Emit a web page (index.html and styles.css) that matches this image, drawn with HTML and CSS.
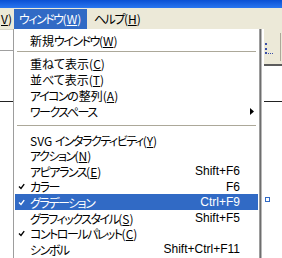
FILE: index.html
```html
<!DOCTYPE html>
<html>
<head>
  <meta charset="UTF-8" />
  <title>ウィンドウ メニュー</title>
  <link rel="stylesheet" href="styles.css">
</head>
<body>

  <div class="titlebar"></div>

  <div class="menubar">
    <span class="mb-item mb-prev"><u>V</u>)</span>
    <span class="mb-item mb-active"><span class="kn">ウィンドウ</span>(<u>W</u>)</span>
    <span class="mb-item"><span class="kn">ヘルプ</span>(<u>H</u>)</span>
  </div>

  <div class="desk">
    <div class="pane-left">
      <div class="pl-top"></div>
      <div class="pl-mid"></div>
    </div>
    <div class="pane-doc"></div>
    <div class="pane-right">
      <div class="pr-tool">
        <span class="grip"></span>
        <span class="tb-sep"></span>
      </div>
      <div class="pr-mid"></div>
      <div class="anchor"></div>
    </div>
  </div>

  <div class="dropdown">
    <div class="group">
      <div class="row"><span class="check"></span><span class="label">新規<span class="kn">ウインドウ</span>(<u>W</u>)</span></div>
    </div>
    <div class="sep sep-a"></div>
    <div class="group">
      <div class="row"><span class="check"></span><span class="label">重ねて表示(<u>C</u>)</span></div>
      <div class="row"><span class="check"></span><span class="label">並べて表示(<u>T</u>)</span></div>
      <div class="row"><span class="check"></span><span class="label"><span class="kn">アイコン</span>の整列(<u>A</u>)</span></div>
      <div class="row">
        <span class="check"></span><span class="label"><span class="kn">ワークスペース</span></span><span class="keys"></span>
        <span class="sub"><svg width="4" height="7" viewBox="0 0 4 7"><polygon points="0,0 4,3.5 0,7" fill="#000"/></svg></span>
      </div>
    </div>
    <div class="sep sep-b"></div>
    <div class="group lower">
      <div class="row"><span class="check"></span><span class="label">SVG <span class="kn">インタラクティビティ</span>(<u>Y</u>)</span></div>
      <div class="row"><span class="check"></span><span class="label"><span class="kn">アクション</span>(<u>N</u>)</span></div>
      <div class="row"><span class="check"></span><span class="label"><span class="kn">アピアランス</span>(<u>E</u>)</span><span class="keys">Shift+F6</span></div>
      <div class="row">
        <span class="check"><svg width="7" height="7" viewBox="0 0 7 7"><path d="M1 3.5 L3 5.5 L6.2 1.2" fill="none" stroke="currentColor" stroke-width="1.4"/></svg></span>
        <span class="label"><span class="kn">カラー</span></span><span class="keys">F6</span>
      </div>
      <div class="row active">
        <span class="check"><svg width="7" height="7" viewBox="0 0 7 7"><path d="M1 3.5 L3 5.5 L6.2 1.2" fill="none" stroke="currentColor" stroke-width="1.4"/></svg></span>
        <span class="label"><span class="kn">グラデーション</span></span><span class="keys">Ctrl+F9</span>
      </div>
      <div class="row"><span class="check"></span><span class="label"><span class="kn">グラフィックスタイル</span>(<u>S</u>)</span><span class="keys">Shift+F5</span></div>
      <div class="row">
        <span class="check"><svg width="7" height="7" viewBox="0 0 7 7"><path d="M1 3.5 L3 5.5 L6.2 1.2" fill="none" stroke="currentColor" stroke-width="1.4"/></svg></span>
        <span class="label"><span class="kn">コントロールパレット</span>(<u>C</u>)</span>
      </div>
      <div class="row"><span class="check"></span><span class="label"><span class="kn">シンボル</span></span><span class="keys">Shift+Ctrl+F11</span></div>
    </div>
  </div>

</body>
</html>
```

FILE: styles.css
```css
body {
  margin: 0;
  width: 282px;
  height: 258px;
  overflow: hidden;
  position: relative;
  background: #fff;
  color: #000;
  font-family: "Noto Sans CJK JP", sans-serif;
  font-size: 12px;
  font-feature-settings: "palt";
}

u {
  text-decoration: underline;
  text-underline-offset: 1px;
}

/* katakana runs are set tighter, like the old UI font */
.kn {
  letter-spacing: -1.5px;
}

.titlebar {
  height: 8px;
  background: linear-gradient(#0a50d4, #2a76f0);
}

.menubar {
  height: 21px;
  padding-top: 1px;
  box-sizing: border-box;
  background: #ece9d8;
  display: flex;
  overflow: hidden;
}

.mb-item {
  height: 20px;
  line-height: 20px;
  padding: 0 7px;
  white-space: nowrap;
}

.mb-prev {
  width: 12px;
  padding: 0 0 0 1px;
  box-sizing: border-box;
}

.mb-active {
  margin-left: 2px;
  width: 73px;
  padding: 0 0 0 5px;
  box-sizing: border-box;
  background: #316ac5;
  color: #fff;
}

.desk {
  display: flex;
  height: 229px;
}

.pane-left {
  width: 13px;
  border-top: 1px solid #d8d5c8;
}

.pl-top {
  height: 20px;
  border-bottom: 1px solid #a0a0a0;
}

.pl-mid {
  height: 50px;
  border-bottom: 1px solid #222;
}

.pane-doc {
  flex: 1;
}

.pane-right {
  width: 18px;
}

.pr-tool {
  height: 35px;
  background: #ece9d8;
  border-bottom: 2px solid #5c5c5c;
  display: flex;
  align-items: center;
}

.grip {
  width: 6px;
  height: 10px;
  margin: 4px 0 0 1px;
  border-left: 2px dotted #3a4fa8;
  border-bottom: 1px dotted #3a4fa8;
}

.tb-sep {
  margin-left: auto;
  margin-right: 1px;
  width: 1px;
  height: 28px;
  background: #aca899;
}

.pr-mid {
  height: 35px;
  border-bottom: 1px solid #222;
}

.anchor {
  width: 3px;
  height: 3px;
  margin: 95px 0 0 1px;
  border: 1px solid #316ac5;
}

/* dropdown menu */
.dropdown {
  position: absolute;
  left: 13px;
  top: 29px;
  width: 247px;
  height: 240px;
  padding: 3px 1px 0;
  box-sizing: border-box;
  background: #fff;
  border-left: 1px solid #9d9d9d;
  border-right: 1px solid #9d9d9d;
  box-shadow: 1px 0 0 #6e6e6e, 2px 0 0 #b8b8b8;
}

.row {
  display: grid;
  grid-template-columns: 15px auto 1fr 18px;
  align-items: center;
  height: 16px;
  white-space: nowrap;
}

.lower .row {
  height: 15.6px;
}

.row.active {
  background: #316ac5;
  color: #fff;
}

.check {
  display: flex;
  justify-content: flex-end;
  padding-right: 5px;
}

.check svg {
  display: block;
}

.keys {
  font-family: "Liberation Sans", sans-serif;
  font-size: 12px;
  text-align: right;
}

.sub {
  display: flex;
  padding-left: 10px;
}

.sep {
  margin: 0 2px;
  border-top: 1px solid #aca899;
}

.sep-a {
  margin-top: 3px;
  margin-bottom: 3px;
}

.sep-b {
  margin-top: 6px;
  margin-bottom: 5.6px;
}
```
